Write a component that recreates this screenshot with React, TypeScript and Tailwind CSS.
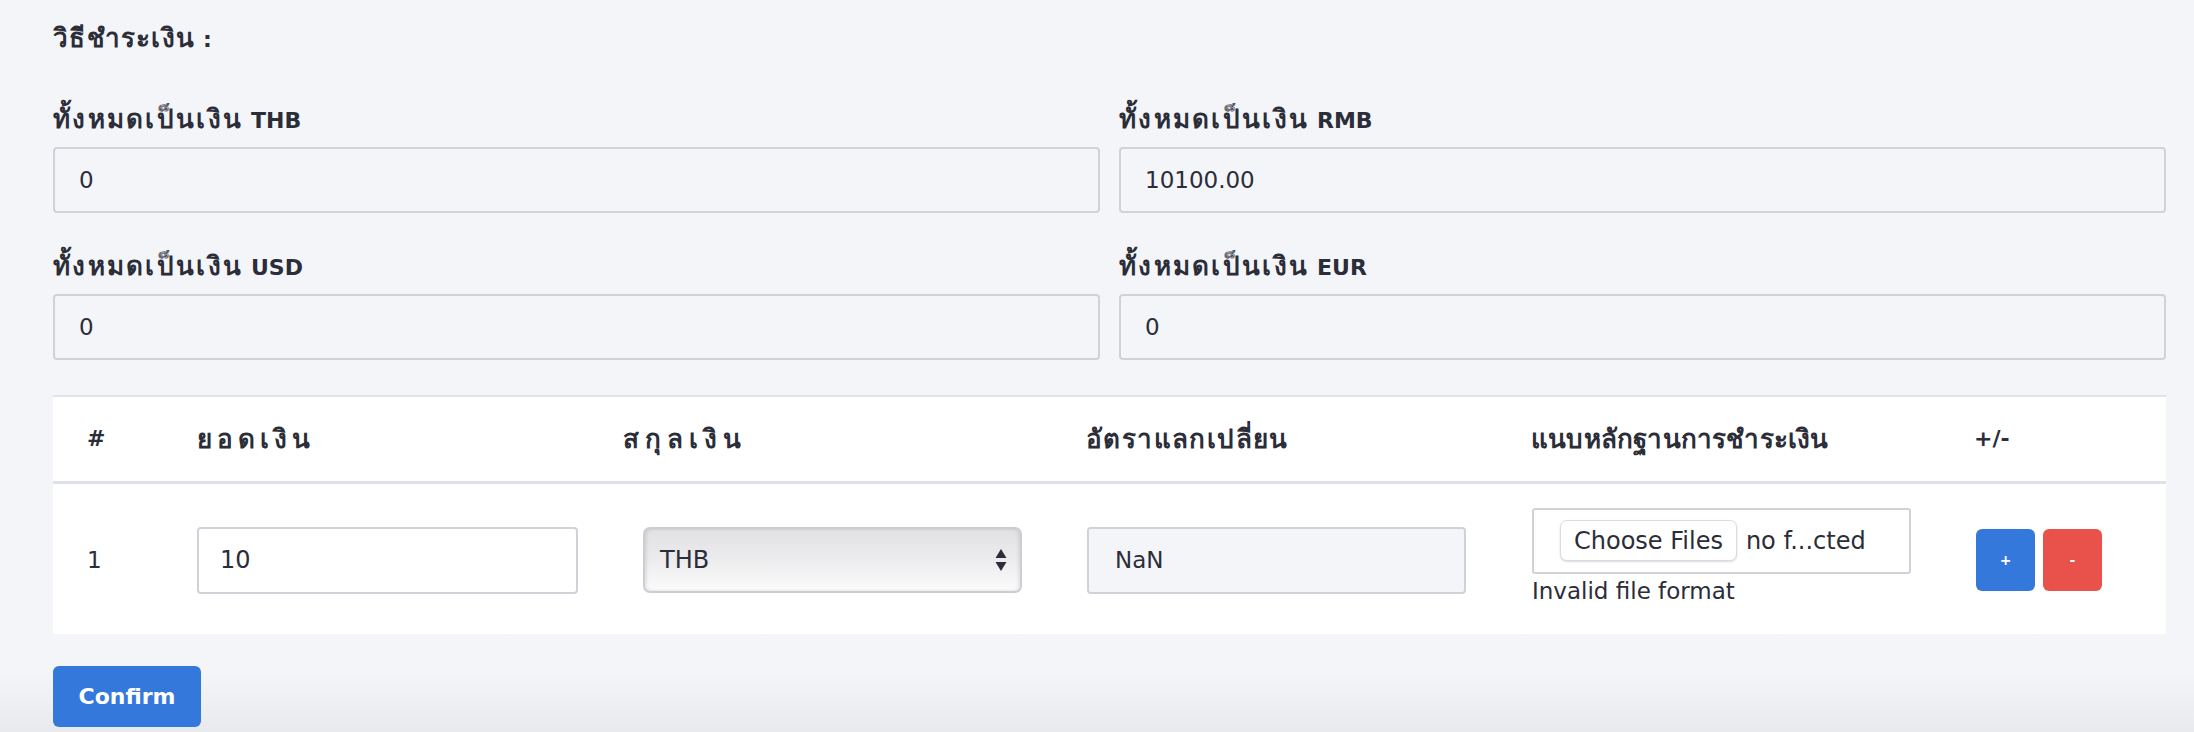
import { useState } from "react";

const font = "font-['DejaVu_Sans','Noto_Sans',sans-serif]";

interface TotalProps {
    currency: string;
    value: string;
}

const TotalField: React.FC<TotalProps> = ({ currency, value }) => {
    return (
        <div className="flex flex-col">
            <label className="h-[28px] text-[22px] font-bold leading-[28px] text-[#2b2d38]">
                <span className="text-[26px] tracking-[2.3px]">ทั้งหมดเป็นเงิน</span> {currency}
            </label>
            <input
                readOnly
                value={value}
                className="mt-[14px] h-[66px] w-full rounded-[4px] border-2 border-[#d0d2d7] bg-[#f4f5f9] px-[24px] text-[23px] text-[#2b2d38] outline-none"
            />
        </div>
    );
};

const SortArrows = () => (
    <svg width="12" height="22" viewBox="0 0 12 22" className="shrink-0">
        <path d="M6 0 L11.5 9 L0.5 9 Z" fill="#2b2d38" />
        <path d="M6 22 L11.5 13 L0.5 13 Z" fill="#2b2d38" />
    </svg>
);

const cols = "grid grid-cols-[110px_426px_463px_445px_443px_1fr]";

export default function App() {
    const [amount, setAmount] = useState<string>("10");

    return (
        <div className={`${font} min-h-[732px] w-full bg-gradient-to-b from-[#f4f5f9] from-[92%] to-[#e9eaee] pl-[53px] pr-[28px] pt-[21px] text-[#2b2d38]`}>
            <h3 className="h-[34px] text-[22px] font-bold leading-[34px]">
                <span className="text-[26px] tracking-[1.3px]">วิธีชำระเงิน</span> :
            </h3>

            <div className="mt-[50px] grid grid-cols-2 gap-x-[19px] gap-y-[39px]">
                <TotalField currency="THB" value="0" />
                <TotalField currency="RMB" value="10100.00" />
                <TotalField currency="USD" value="0" />
                <TotalField currency="EUR" value="0" />
            </div>

            <div className="mt-[35px] border-t-2 border-[#e0e3e9] bg-white">
                <div className={`${cols} h-[87px] items-center border-b-[3px] border-[#dee1e7] text-[26px] font-bold leading-[34px]`}>
                    <div className="pl-[34px] text-[22px]">#</div>
                    <div className="pl-[34px] tracking-[5px]">ยอดเงิน</div>
                    <div className="pl-[34px] tracking-[6px]">สกุลเงิน</div>
                    <div className="pl-[34px] tracking-[1.4px]">อัตราแลกเปลี่ยน</div>
                    <div className="pl-[34px] tracking-[0.2px]">แนบหลักฐานการชำระเงิน</div>
                    <div className="pl-[34px] text-[22px]">+/-</div>
                </div>
                <div className={`${cols} h-[150px] items-center pt-[2px] text-[23px]`}>
                    <div className="pl-[34px]">1</div>
                    <div className="pl-[34px]">
                        <input
                            value={amount}
                            onChange={(e) => setAmount(e.target.value)}
                            className="h-[67px] w-[381px] rounded-[4px] border-2 border-[#d0d2d7] bg-white px-[21px] text-[24px] outline-none"
                        />
                    </div>
                    <div className="pl-[54px]">
                        <div className="flex h-[66px] w-[379px] items-center justify-between rounded-[7px] border-2 border-[#cdcdd3] bg-gradient-to-b from-[#e1e1e3] via-[#ececee] to-[#fbfbfb] pl-[15px] pr-[13px] text-[24px] shadow-[inset_2px_0_3px_rgba(0,0,0,0.08),inset_-2px_0_3px_rgba(0,0,0,0.08)]">
                            <span>THB</span>
                            <SortArrows />
                        </div>
                    </div>
                    <div className="pl-[35px]">
                        <input
                            readOnly
                            value="NaN"
                            className="h-[67px] w-[379px] rounded-[4px] border-2 border-[#d0d2d7] bg-[#f4f5f9] px-[26px] text-[23px] outline-none"
                        />
                    </div>
                    <div className="pl-[35px]">
                        <div className="mt-[-8px] flex h-[66px] w-[379px] items-center rounded-[3px] border-2 border-[#d0d2d7] bg-white pl-[26px] text-[24px]">
                            <span className="flex h-[41px] items-center rounded-[7px] border border-[#dcdce0] bg-white px-[13px] shadow-[0_1px_2px_rgba(0,0,0,0.15)]">Choose Files</span>
                            <span className="ml-[9px]">no f...cted</span>
                        </div>
                        <div className="mt-[4px] text-[23px] leading-[27px]">Invalid file format</div>
                    </div>
                    <div className="flex gap-[8px] pl-[36px]">
                        <button className="flex h-[62px] w-[59px] items-center justify-center rounded-[6px] bg-[#3578db] text-[14px] font-bold text-white">+</button>
                        <button className="flex h-[62px] w-[59px] items-center justify-center rounded-[6px] bg-[#e8524a] text-[14px] font-bold text-white">-</button>
                    </div>
                </div>
            </div>

            <button className="mt-[32px] h-[61px] w-[148px] rounded-[6px] bg-[#3578db] text-[22px] font-bold text-white">Confirm</button>
        </div>
    );
}
